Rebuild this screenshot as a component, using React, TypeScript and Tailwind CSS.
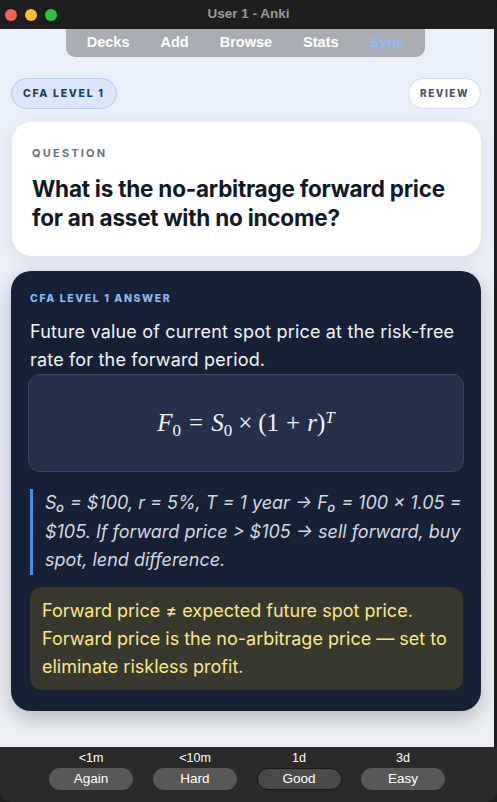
import React from 'react';

const navItems = ['Decks', 'Add', 'Browse', 'Stats'];

const answers = [
  { due: '<1m', label: 'Again' },
  { due: '<10m', label: 'Hard' },
  { due: '1d', label: 'Good', active: true },
  { due: '3d', label: 'Easy' },
];

function TitleBar() {
  return (
    <div className="relative flex h-[29px] items-center justify-center bg-[#1e1e1e] rounded-t-[10px]">
      <div className="absolute left-[5px] top-[9px] flex gap-[8px]">
        <span className="h-[12px] w-[12px] rounded-full bg-[#fe5f57]" />
        <span className="h-[12px] w-[12px] rounded-full bg-[#febc2e]" />
        <span className="h-[12px] w-[12px] rounded-full bg-[#28c840]" />
      </div>
      <span className="font-['Liberation_Sans',sans-serif] text-[13.5px] font-bold text-[#9b9b9b]">User 1 - Anki</span>
    </div>
  );
}

function NavBar() {
  return (
    <div className="flex justify-center pr-[3px]">
      <div className="flex h-[28px] w-[359px] items-center justify-center gap-[31px] rounded-b-[9px] bg-[#a9acb2] font-['Liberation_Sans',sans-serif] text-[14.5px] font-bold text-white">
        {navItems.map((n) => (
          <span key={n}>{n}</span>
        ))}
        <span className="text-[#8dbaf5]">Sync</span>
      </div>
    </div>
  );
}

function Formula() {
  return (
    <div className="font-['Liberation_Serif',serif] text-[25px] text-[#f3f4f6]">
      <i>F</i>
      <sub className="text-[17px] not-italic">0</sub>
      <span className="mx-[8px]">=</span>
      <i>S</i>
      <sub className="text-[17px]">0</sub>
      <span className="mx-[6px]">×</span>
      <span>(1</span>
      <span className="mx-[7px]">+</span>
      <i>r</i>
      <span>)</span>
      <sup className="text-[17px] italic">T</sup>
    </div>
  );
}

export default function App() {
  return (
    <div className="flex h-[802px] w-[497px] flex-col overflow-hidden bg-[#1e1e1e] font-['Inter',sans-serif]">
      <TitleBar />
      <div className="flex flex-1 flex-col border-r-[3px] border-[#1e1e1e] bg-gradient-to-b from-[#e9effb] to-[#eef0f5]">
        <NavBar />
        <div className="flex flex-col pl-[11px] pr-[13px] pt-[21px]">
          <div className="flex items-center justify-between">
            <span className="flex h-[31px] items-center rounded-full border border-[#b6c9ee] bg-[#dce6fa] px-[11px] text-[10.5px] font-extrabold tracking-[0.16em] text-[#1d3b6c]">
              CFA LEVEL 1
            </span>
            <span className="flex h-[31px] items-center rounded-full border border-[#d9dde4] bg-white px-[11px] text-[10px] font-extrabold tracking-[0.15em] text-[#4b5563]">
              REVIEW
            </span>
          </div>

          <div className="mt-[13px] ml-[1px] rounded-[20px] bg-white px-[20px] pt-[24px] pb-[24px] shadow-[0_6px_18px_rgba(30,41,59,0.08)]">
            <div className="text-[11px] font-bold leading-[14px] tracking-[0.2em] text-[#6b7280]">QUESTION</div>
            <div className="mt-[14px] text-[22.5px] font-bold leading-[29px] tracking-[-0.01em] text-[#111827]">
              What is the no-arbitrage forward price for an asset with no income?
            </div>
          </div>

          <div className="mt-[15px] rounded-[20px] bg-[#162136] pl-[19px] pr-[18px] pt-[21px] pb-[21px] shadow-[0_8px_20px_rgba(15,23,42,0.25)]">
            <div className="text-[10.5px] font-extrabold leading-[14px] tracking-[0.15em] text-[#8cb9f2]">CFA LEVEL 1 ANSWER</div>
            <div className="mt-[12px] text-[18px] leading-[28px] tracking-[0.01em] text-[#f3f4f6]">
              Future value of current spot price at the risk-free rate for the forward period.
            </div>
            <div className="-ml-[2px] -mr-[1px] flex h-[98px] items-center justify-center rounded-[12px] border border-[#3b475d] bg-[#25314a]">
              <Formula />
            </div>
            <div className="mt-[17px] border-l-[3px] border-[#4a8fe6] pl-[12px] text-[18px] italic leading-[28.5px] text-[#d4d8de]">
              S₀ = $100, r = 5%, T = 1 year → F₀ = 100 × 1.05 = $105. If forward price &gt; $105 → sell forward, buy spot, lend difference.
            </div>
            <div className="mt-[12px] rounded-[12px] bg-[#38382f] px-[12px] pt-[10px] pb-[9px] text-[18px] leading-[28px] text-[#fde68a]">
              Forward price ≠ expected future spot price. Forward price is the no-arbitrage price — set to eliminate riskless profit.
            </div>
          </div>
        </div>
      </div>
      <div className="flex h-[55px] items-start justify-center gap-[20px] rounded-b-[10px] bg-[#2a2a2a] pr-[3px] pt-[4px] font-['Liberation_Sans',sans-serif]">
        {answers.map((a) => (
          <div key={a.label} className="flex w-[84px] flex-col items-center">
            <span className="text-[12.5px] leading-[15px] text-white">{a.due}</span>
            <span
              className={
                a.active
                  ? 'mt-[2px] flex h-[22px] w-[85px] items-center justify-center rounded-full border border-[#1a1a1a] bg-[#4a4a4a] text-[13.5px] text-white'
                  : 'mt-[2px] flex h-[22px] w-[84px] items-center justify-center rounded-full bg-[#585858] text-[13.5px] text-white'
              }
            >
              {a.label}
            </span>
          </div>
        ))}
      </div>
    </div>
  );
}
